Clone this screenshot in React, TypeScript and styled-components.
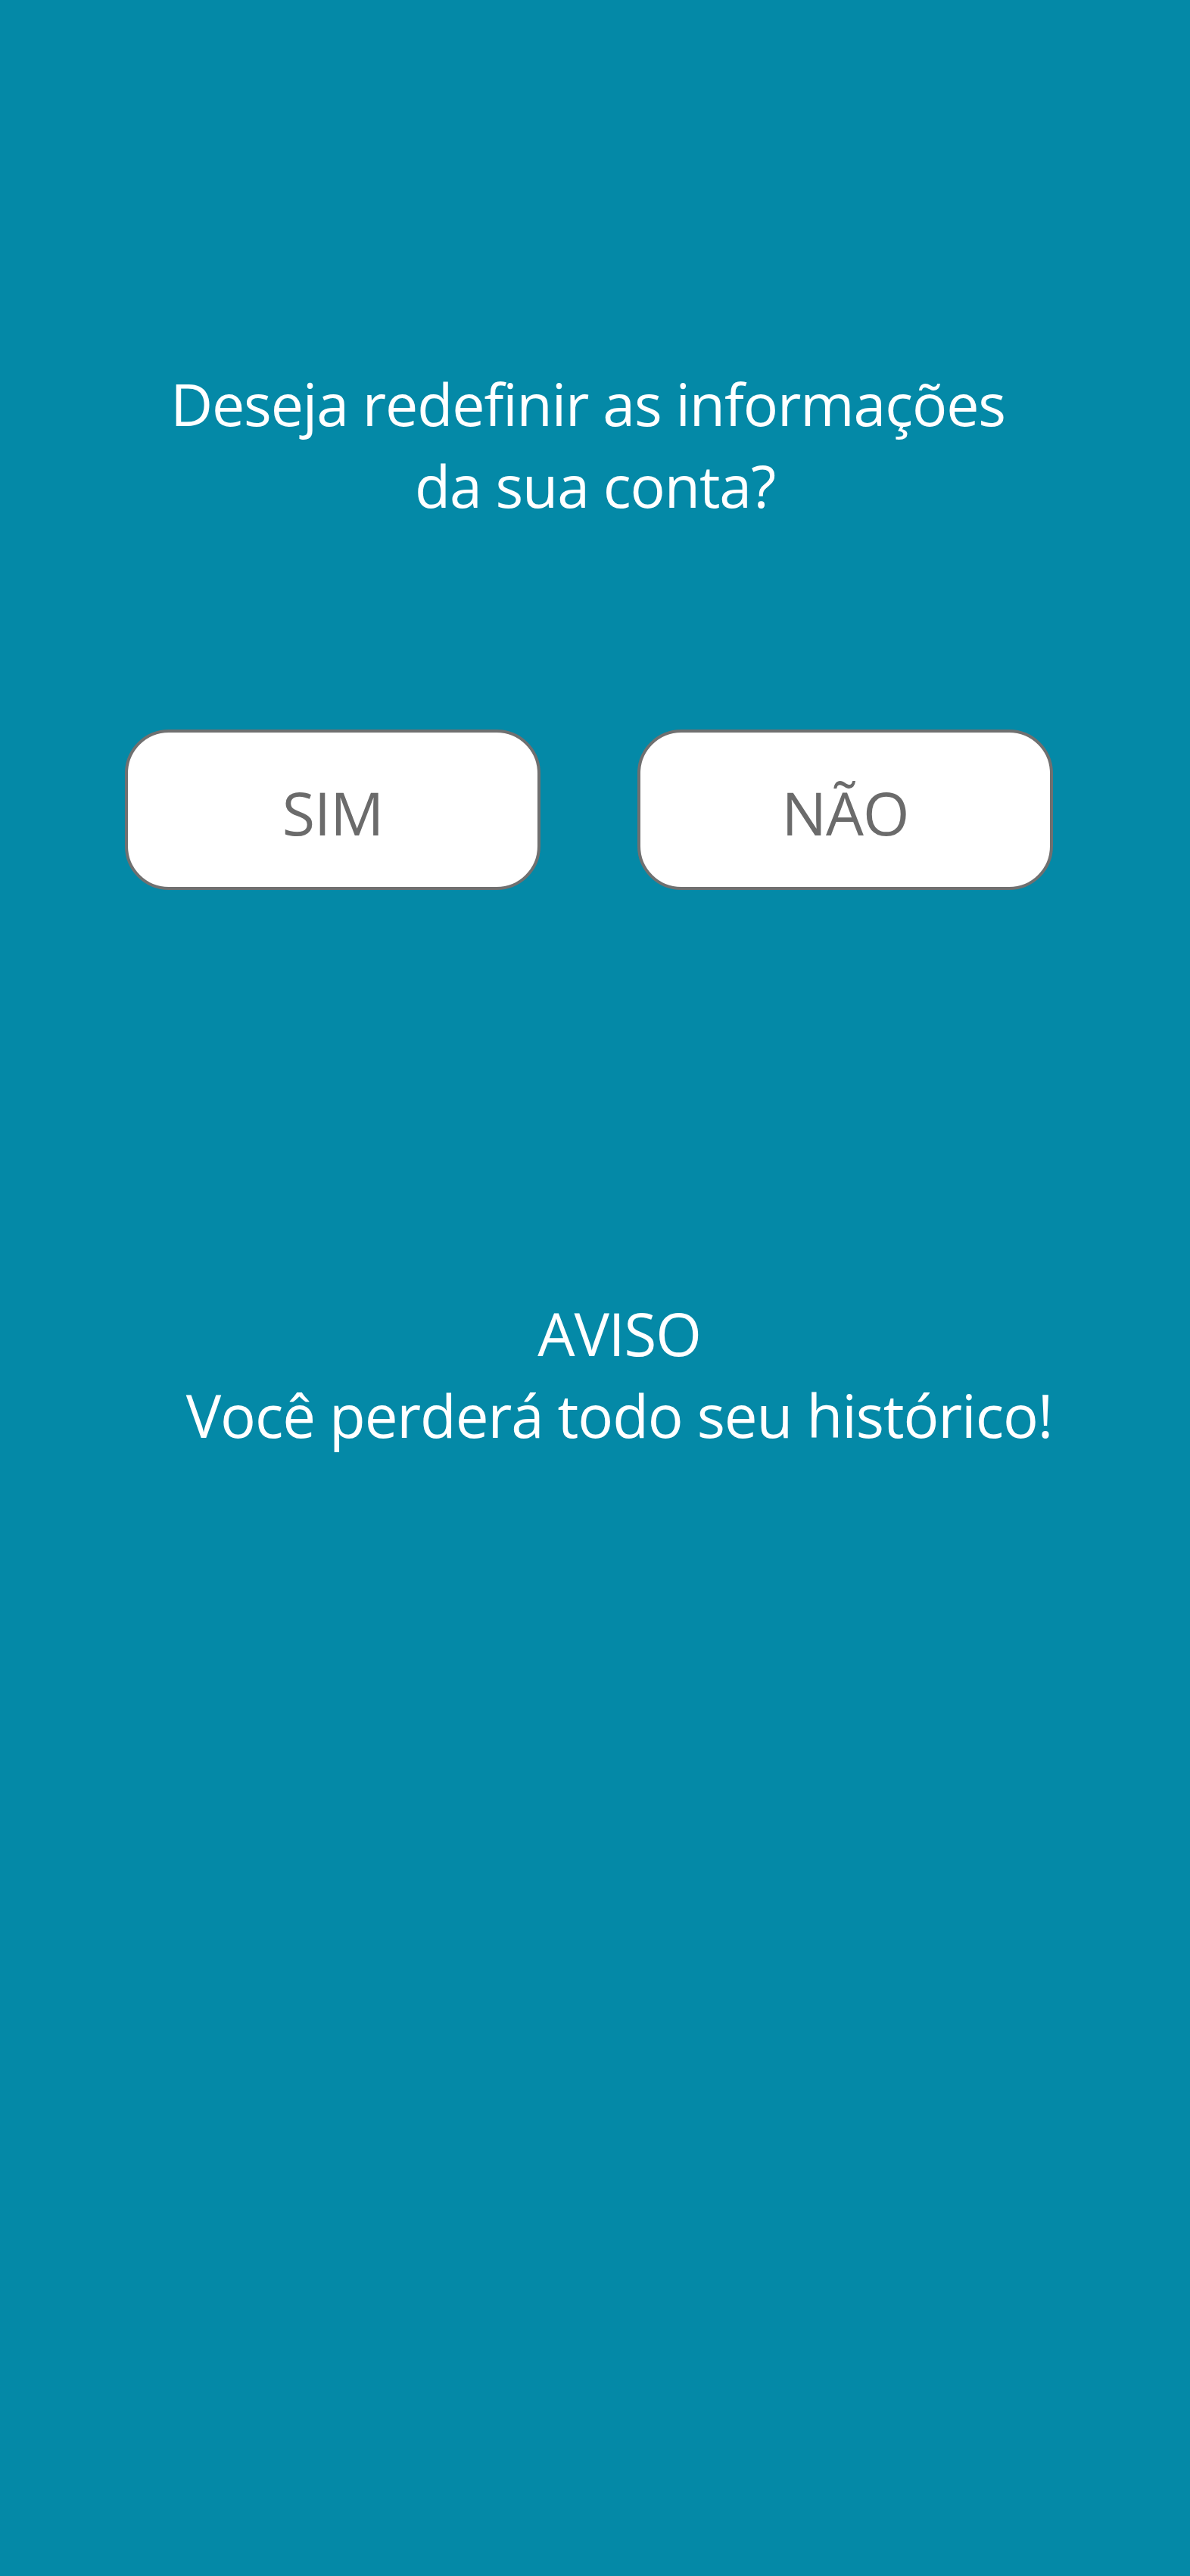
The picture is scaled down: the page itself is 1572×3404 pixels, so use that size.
import React from "react";
import styled, { createGlobalStyle } from "styled-components";

const Global = createGlobalStyle`
  html, body { margin: 0; padding: 0; }
  body { background: #0489a7; font-family: "Open Sans", "Noto Sans", sans-serif; }
`;

const Page = styled.main`
  width: 1572px;
  height: 3404px;
  background: #0489a7;
  display: flex;
  flex-direction: column;
  align-items: center;
  padding-top: 480px;
  box-sizing: border-box;
`;

const Question = styled.h1`
  margin: 0;
  font-weight: 400;
  font-size: 77px;
  line-height: 108px;
  letter-spacing: -1.1px;
  color: #ffffff;
  text-align: center;
`;

const Buttons = styled.div`
  margin-top: 268px;
  margin-right: 16px;
  display: flex;
  gap: 128px;
`;

const Choice = styled.button`
  width: 549px;
  height: 212px;
  box-sizing: border-box;
  background: #ffffff;
  border: 4px solid #707070;
  border-radius: 58px;
  display: flex;
  align-items: center;
  justify-content: center;
  padding: 6px 0 0;
  font-family: "Open Sans", "Noto Sans", sans-serif;
  font-size: 79px;
  font-weight: 400;
  letter-spacing: -1px;
  color: #6b6b6b;
  cursor: pointer;
`;

const Warning = styled.p`
  margin: 532px 0 0;
  padding-left: 64px;
  font-weight: 400;
  font-size: 78px;
  line-height: 108px;
  letter-spacing: -1.1px;
  color: #ffffff;
  text-align: center;
`;

export default function App() {
  return (
    <>
      <Global />
      <Page>
        <Question>
          Deseja redefinir as informações{"\u00a0"}
          <br />
          da sua conta?
        </Question>
        <Buttons>
          <Choice type="button">SIM</Choice>
          <Choice type="button">NÃO</Choice>
        </Buttons>
        <Warning>
          AVISO
          <br />
          Você perderá todo seu histórico!
        </Warning>
      </Page>
    </>
  );
}
